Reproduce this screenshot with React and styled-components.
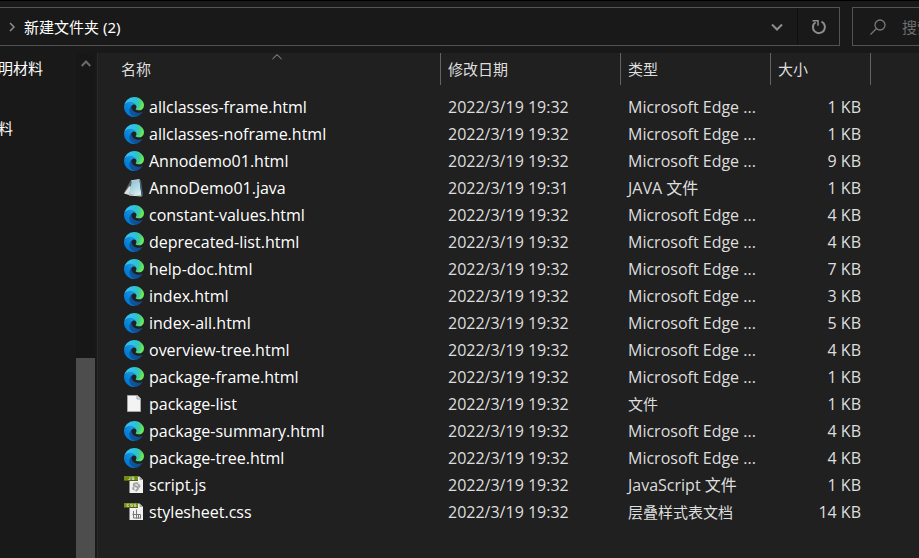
import React from "react";
import styled, { createGlobalStyle } from "styled-components";

const GlobalStyle = createGlobalStyle`
  *, *::before, *::after { box-sizing: border-box; }
  body {
    margin: 0;
    background: #202020;
    color: #fff;
    font-family: "Open Sans", "Noto Sans CJK SC", sans-serif;
    font-size: 15px;
    line-height: 20px;
    overflow: hidden;
  }
  button, input { font: inherit; color: inherit; background: none; border: 0; padding: 0; margin: 0; }
`;

const Window = styled.div`
  display: flex;
  flex-direction: column;
  height: 100vh;
  border-top: 1px solid #000;
`;

const Toolbar = styled.header`
  display: flex;
  flex: none;
  gap: 12px;
  padding: 6px 0 7px;
  background: #191919;
`;

const AddressBar = styled.div`
  display: flex;
  flex: 1;
  height: 39px;
  border: 1px solid #535353;
  border-left: 0;
`;

const Crumb = styled.nav`
  display: flex;
  flex: 1;
  align-items: center;
  gap: 8px;
  padding-left: 8px;
`;

const CrumbLink = styled.a`
  font-family: "Noto Sans", "Noto Sans CJK SC", sans-serif;
  color: #fff;
  text-decoration: none;
  white-space: nowrap;
`;

const BarButton = styled.button`
  display: flex;
  align-items: center;
  justify-content: center;
  width: ${(p) => (p.$divided ? 42 : 41)}px;
  color: #8e8e8e;
  border-left: 1px solid ${(p) => (p.$divided ? "#101010" : "transparent")};
`;

const SearchBox = styled.label`
  display: flex;
  align-items: center;
  gap: 16px;
  width: 67px;
  padding-left: 17px;
  border: 1px solid #535353;
  border-right: 0;
  overflow: hidden;
  color: #777;
`;

const SearchInput = styled.input`
  flex: 1;
  min-width: 0;
  &::placeholder { color: #6d6d6d; opacity: 1; }
`;

const Body = styled.div`
  display: flex;
  flex: 1;
  min-height: 0;
`;

const Sidebar = styled.aside`
  display: flex;
  flex: none;
  width: 98px;
  background: #191919;
  border-right: 1px solid #2b2b2b;
`;

const Places = styled.nav`
  display: grid;
  flex: 1;
  grid-auto-rows: 30px;
  align-content: start;
`;

const Place = styled.a`
  grid-row: ${(p) => p.$row};
  line-height: 30px;
  color: #fff;
  text-decoration: none;
  white-space: nowrap;
  margin-left: -2px;
`;

const ScrollBar = styled.div`
  display: flex;
  flex-direction: column;
  width: 19px;
  margin-right: 2px;
  background: #171717;
`;

const ScrollArrow = styled.button`
  display: flex;
  align-items: center;
  justify-content: center;
  height: 20px;
  color: #6b6b6b;
`;

const ScrollTrack = styled.div`
  display: grid;
  flex: 1;
  grid-template-rows: 285fr 200fr;
`;

const ScrollThumb = styled.div`
  grid-row: 2;
  background: #4d4d4d;
`;

const Content = styled.main`
  flex: 1;
  min-width: 0;
  padding-left: 16px;
`;

const FileTable = styled.table`
  width: 757px;
  table-layout: fixed;
  border-collapse: collapse;
`;

const Column = styled.col`
  width: ${(p) => p.$width}px;
`;

const HeadCell = styled.th`
  padding: 0 0 8px;
  font-weight: 400;
  text-align: left;
`;

const HeadButton = styled.button`
  display: flex;
  position: relative;
  align-items: center;
  width: 100%;
  height: 32px;
  padding-left: 7px;
  border-right: 1px solid #636363;
  color: #dedede;
`;

const SortMark = styled.span`
  display: flex;
  position: absolute;
  top: 1px;
  left: 0;
  right: 0;
  justify-content: center;
  color: #a0a0a0;
`;

const Cell = styled.td`
  height: 27px;
  padding: 0 10px 0 7px;
  font-size: ${(p) => (p.$cjk ? 15 : 16)}px;
  text-align: ${(p) => (p.$end ? "right" : "left")};
  white-space: nowrap;
  color: #dedede;
`;

const NameCell = styled(Cell)`
  padding: 0 0 0 10px;
  color: #fff;
`;

const FileName = styled.div`
  display: flex;
  align-items: center;
  gap: 5px;
`;

const Icon = styled.svg`
  display: block;
  flex: none;
  width: ${(p) => p.$w}px;
  height: ${(p) => p.$h || p.$w}px;
`;

const Sprite = styled.svg`
  display: block;
  width: 0;
  height: 0;
`;

function IconDefs() {
  return (
    <Sprite aria-hidden="true">
      <defs>
        <linearGradient id="edgeDark" gradientUnits="userSpaceOnUse" x1="63" y1="182" x2="241" y2="182">
          <stop offset="0" stopColor="#0c59a4" />
          <stop offset="1" stopColor="#114a8b" />
        </linearGradient>
        <linearGradient id="edgeBlue" gradientUnits="userSpaceOnUse" x1="157" y1="104" x2="46" y2="225">
          <stop offset="0" stopColor="#1b9de2" />
          <stop offset="0.16" stopColor="#1595df" />
          <stop offset="0.67" stopColor="#0680d7" />
          <stop offset="1" stopColor="#0078d4" />
        </linearGradient>
        <radialGradient id="edgeGreen" gradientUnits="userSpaceOnUse" cx="25" cy="52" r="235">
          <stop offset="0" stopColor="#35c1f1" />
          <stop offset="0.3" stopColor="#34c1ed" />
          <stop offset="0.45" stopColor="#2fc2df" />
          <stop offset="0.6" stopColor="#2bc3d2" />
          <stop offset="0.8" stopColor="#45cf8a" />
          <stop offset="0.95" stopColor="#66eb5e" />
        </radialGradient>
        <linearGradient id="noteBlue" x1="0" y1="0" x2="0.6" y2="1">
          <stop offset="0" stopColor="#8fbccb" />
          <stop offset="0.5" stopColor="#a9d3df" />
          <stop offset="1" stopColor="#d3eef2" />
        </linearGradient>
      </defs>
    </Sprite>
  );
}

function EdgeIcon() {
  return (
    <Icon $w={20} viewBox="0 0 256 256" aria-hidden="true">
      <g transform="translate(-4.63 -4.92)">
        <path fill="url(#edgeDark)" d="M235.68 195.46a93.73 93.73 0 0 1-10.54 4.71 101.87 101.87 0 0 1-35.9 6.46c-47.32 0-88.54-32.55-88.54-74.32A31.48 31.48 0 0 1 117.13 105c-42.8 1.8-53.8 46.4-53.8 72.53 0 73.88 68.09 81.37 82.76 81.37 7.91 0 19.84-2.3 27-4.56l1.31-.44a128.34 128.34 0 0 0 66.6-52.8 4 4 0 0 0-5.32-5.64z" />
        <path fill="url(#edgeBlue)" d="M110.34 246.34A79.2 79.2 0 0 1 87.6 225a80.72 80.72 0 0 1 29.53-120c3.12-1.47 8.45-4.13 15.54-4a32.35 32.35 0 0 1 25.69 13 31.88 31.88 0 0 1 6.36 18.66c0-.21 24.46-79.6-80-79.6-43.9 0-80 41.66-80 78.21a130.15 130.15 0 0 0 12.11 56 128 128 0 0 0 156.38 67.11 75.55 75.55 0 0 1-62.78-8z" />
        <path fill="url(#edgeGreen)" d="M156.94 153.78c-.81 1.05-3.3 2.5-3.3 5.66 0 2.61 1.7 5.12 4.72 7.23 14.38 10 41.49 8.68 41.56 8.68a59.56 59.56 0 0 0 30.27-8.35 61.38 61.38 0 0 0 30.43-52.88c.26-22.41-8-37.31-11.34-43.91C228.09 28.76 182.35 4.92 132.61 4.92a128 128 0 0 0-128 126.2c.48-36.54 36.8-66.05 80-66.05 3.5 0 23.46.34 42 10.07 16.34 8.58 24.9 18.94 30.85 29.21 6.18 10.67 7.28 24.15 7.28 29.52s-2.74 13.33-7.8 19.91z" />
      </g>
    </Icon>
  );
}

function NotepadIcon() {
  return (
    <Icon $w={20} viewBox="0 0 20 20" aria-hidden="true">
      <path d="M0 15L6.5 2.5 9 3 5.500 16z" fill="#566165" />
      <path d="M0 15.500L5.500 8l1.500 1-2 8z" fill="#d8e2e4" />
      <path d="M8 2.500L15.500 1.500l2 16L5 16.500z" fill="url(#noteBlue)" />
      <path d="M15.500 1.500l1.500 1 2 15-1.500 1z" fill="#3d6577" />
      <path d="M7 2.200L15.500 1l.3 1.300-8.800 1.200z" fill="#bcc8cb" />
      <path d="M5 16.500l12.500 1v1L5 17.500z" fill="#efe9df" />
    </Icon>
  );
}

function BlankIcon() {
  return (
    <Icon $w={20} viewBox="0 0 20 20" aria-hidden="true">
      <path d="M3.5 1.5h10l3 3v13h-13z" fill="#f3f3f3" stroke="#a5a5a5" />
      <path d="M13 1.5v3.5h3.5" fill="#ddd" stroke="#a5a5a5" />
    </Icon>
  );
}

function CodeIcon({ kind }) {
  const js = kind === "js";
  return (
    <Icon $w={20} viewBox="0 0 20 20" aria-hidden="true">
      <path d="M5.5 1.5h10l3.5 3.5v13H5.5z" fill="#f1f1f1" />
      <path d="M15.5 1.5V5H19z" fill="#aaa" />
      <path d="M0 1h14v5H0z" fill="#738c16" />
      <path d="M0 5h14v1H0z" fill="#4d6508" />
      {js ? (
        <path d="M6 2v2.5H4.5M10 2.2H8v1h2v1.3H7.8" fill="none" stroke="#c9d69a" />
      ) : (
        <path d="M5 2.2H3v2.2h2M8.5 2.2h-2v1h2v1.2h-2M12 2.2h-2v1h2v1.2h-2" fill="none" stroke="#c9d69a" />
      )}
      {js ? (
        <g fill="none" stroke="#a3a3a3" strokeWidth="2">
          <path d="M14 8.5c-3-.8-5 .5-4 2s4 .5 4 2.500-1.500 2-2.500 3" />
          <path d="M10 12c-1.500 1-1 2.500.5 2.500M14 9l1.500 2-1 1.500" />
        </g>
      ) : (
        <path d="M9.5 9v7h7M12.5 7.500v9M8.5 12.5h8v4M14.5 12.5v4" fill="none" stroke="#777" />
      )}
    </Icon>
  );
}

function FileIcon({ kind }) {
  if (kind === "edge") return <EdgeIcon />;
  if (kind === "java") return <NotepadIcon />;
  if (kind === "blank") return <BlankIcon />;
  return <CodeIcon kind={kind} />;
}

const EDGE = "Microsoft Edge ...";
const FILES = [
  ["edge", "allclasses-frame.html", "19:32", EDGE, 1],
  ["edge", "allclasses-noframe.html", "19:32", EDGE, 1],
  ["edge", "Annodemo01.html", "19:32", EDGE, 9],
  ["java", "AnnoDemo01.java", "19:31", "JAVA 文件", 1],
  ["edge", "constant-values.html", "19:32", EDGE, 4],
  ["edge", "deprecated-list.html", "19:32", EDGE, 4],
  ["edge", "help-doc.html", "19:32", EDGE, 7],
  ["edge", "index.html", "19:32", EDGE, 3],
  ["edge", "index-all.html", "19:32", EDGE, 5],
  ["edge", "overview-tree.html", "19:32", EDGE, 4],
  ["edge", "package-frame.html", "19:32", EDGE, 1],
  ["blank", "package-list", "19:32", "文件", 1],
  ["edge", "package-summary.html", "19:32", EDGE, 4],
  ["edge", "package-tree.html", "19:32", EDGE, 4],
  ["js", "script.js", "19:32", "JavaScript 文件", 1],
  ["css", "stylesheet.css", "19:32", "层叠样式表文档", 14],
];

const COLUMNS = [
  ["名称", 327],
  ["修改日期", 180],
  ["类型", 150],
  ["大小", 100],
];

const isCjkOnly = (text) => !/[A-Za-z]/.test(text);

export default function App() {
  return (
    <Window>
      <GlobalStyle />
      <Toolbar>
        <AddressBar>
          <Crumb aria-label="地址">
            <Icon $w={8} $h={10} viewBox="0 0 8 10" aria-hidden="true">
              <path d="M2 1l4 4-4 4" fill="none" stroke="#8e8e8e" strokeWidth="1.5" />
            </Icon>
            <CrumbLink href="#folder">新建文件夹 (2)</CrumbLink>
          </Crumb>
          <BarButton aria-label="历史记录">
            <Icon $w={12} $h={8} viewBox="0 0 12 8" aria-hidden="true">
              <path d="M1 1.5l5 5 5-5" fill="none" stroke="currentColor" strokeWidth="2" />
            </Icon>
          </BarButton>
          <BarButton $divided aria-label="刷新">
            <Icon $w={16} viewBox="0 0 16 16" aria-hidden="true">
              <path d="M10.5 2.7A6 6 0 1 1 4.5 3.2" fill="none" stroke="currentColor" strokeWidth="2" />
              <path d="M1.5 1.7H7v5" fill="none" stroke="currentColor" strokeWidth="1.5" />
            </Icon>
          </BarButton>
        </AddressBar>
        <SearchBox>
          <Icon $w={16} viewBox="0 0 16 16" aria-hidden="true">
            <circle cx="10" cy="6" r="5" fill="none" stroke="currentColor" strokeWidth="1.3" />
            <path d="M6.5 9.5l-6 6" stroke="currentColor" strokeWidth="1.3" />
          </Icon>
          <SearchInput aria-label="搜索" placeholder="搜索" />
        </SearchBox>
      </Toolbar>
      <Body>
        <Sidebar>
          <Places aria-label="导航">
            <Place $row={1} href="#materials">明材料</Place>
            <Place $row={3} href="#data">料</Place>
          </Places>
          <ScrollBar>
            <ScrollArrow aria-label="向上滚动">
              <Icon $w={10} $h={7} viewBox="0 0 10 7" aria-hidden="true">
                <path d="M.7 6L5 1.5 9.3 6" fill="none" stroke="currentColor" strokeWidth="2" />
              </Icon>
            </ScrollArrow>
            <ScrollTrack>
              <ScrollThumb />
            </ScrollTrack>
          </ScrollBar>
        </Sidebar>
        <Content>
          <FileTable>
            <colgroup>
              {COLUMNS.map(([label, width]) => (
                <Column key={label} $width={width} />
              ))}
            </colgroup>
            <thead>
              <tr>
                {COLUMNS.map(([label], i) => (
                  <HeadCell key={label} scope="col">
                    <HeadButton>
                      {label}
                      {i === 0 && (
                        <SortMark>
                          <Icon $w={10} $h={6} viewBox="0 0 10 6" aria-hidden="true">
                            <path d="M.5 5L5 .7 9.5 5" fill="none" stroke="currentColor" />
                          </Icon>
                        </SortMark>
                      )}
                    </HeadButton>
                  </HeadCell>
                ))}
              </tr>
            </thead>
            <tbody>
              {FILES.map(([kind, name, time, type, size]) => (
                <tr key={name}>
                  <NameCell>
                    <FileName>
                      <FileIcon kind={kind} />
                      {name}
                    </FileName>
                  </NameCell>
                  <Cell>2022/3/19 {time}</Cell>
                  <Cell $cjk={isCjkOnly(type)}>{type}</Cell>
                  <Cell $end>{size} KB</Cell>
                </tr>
              ))}
            </tbody>
          </FileTable>
        </Content>
      </Body>
      <IconDefs />
    </Window>
  );
}
